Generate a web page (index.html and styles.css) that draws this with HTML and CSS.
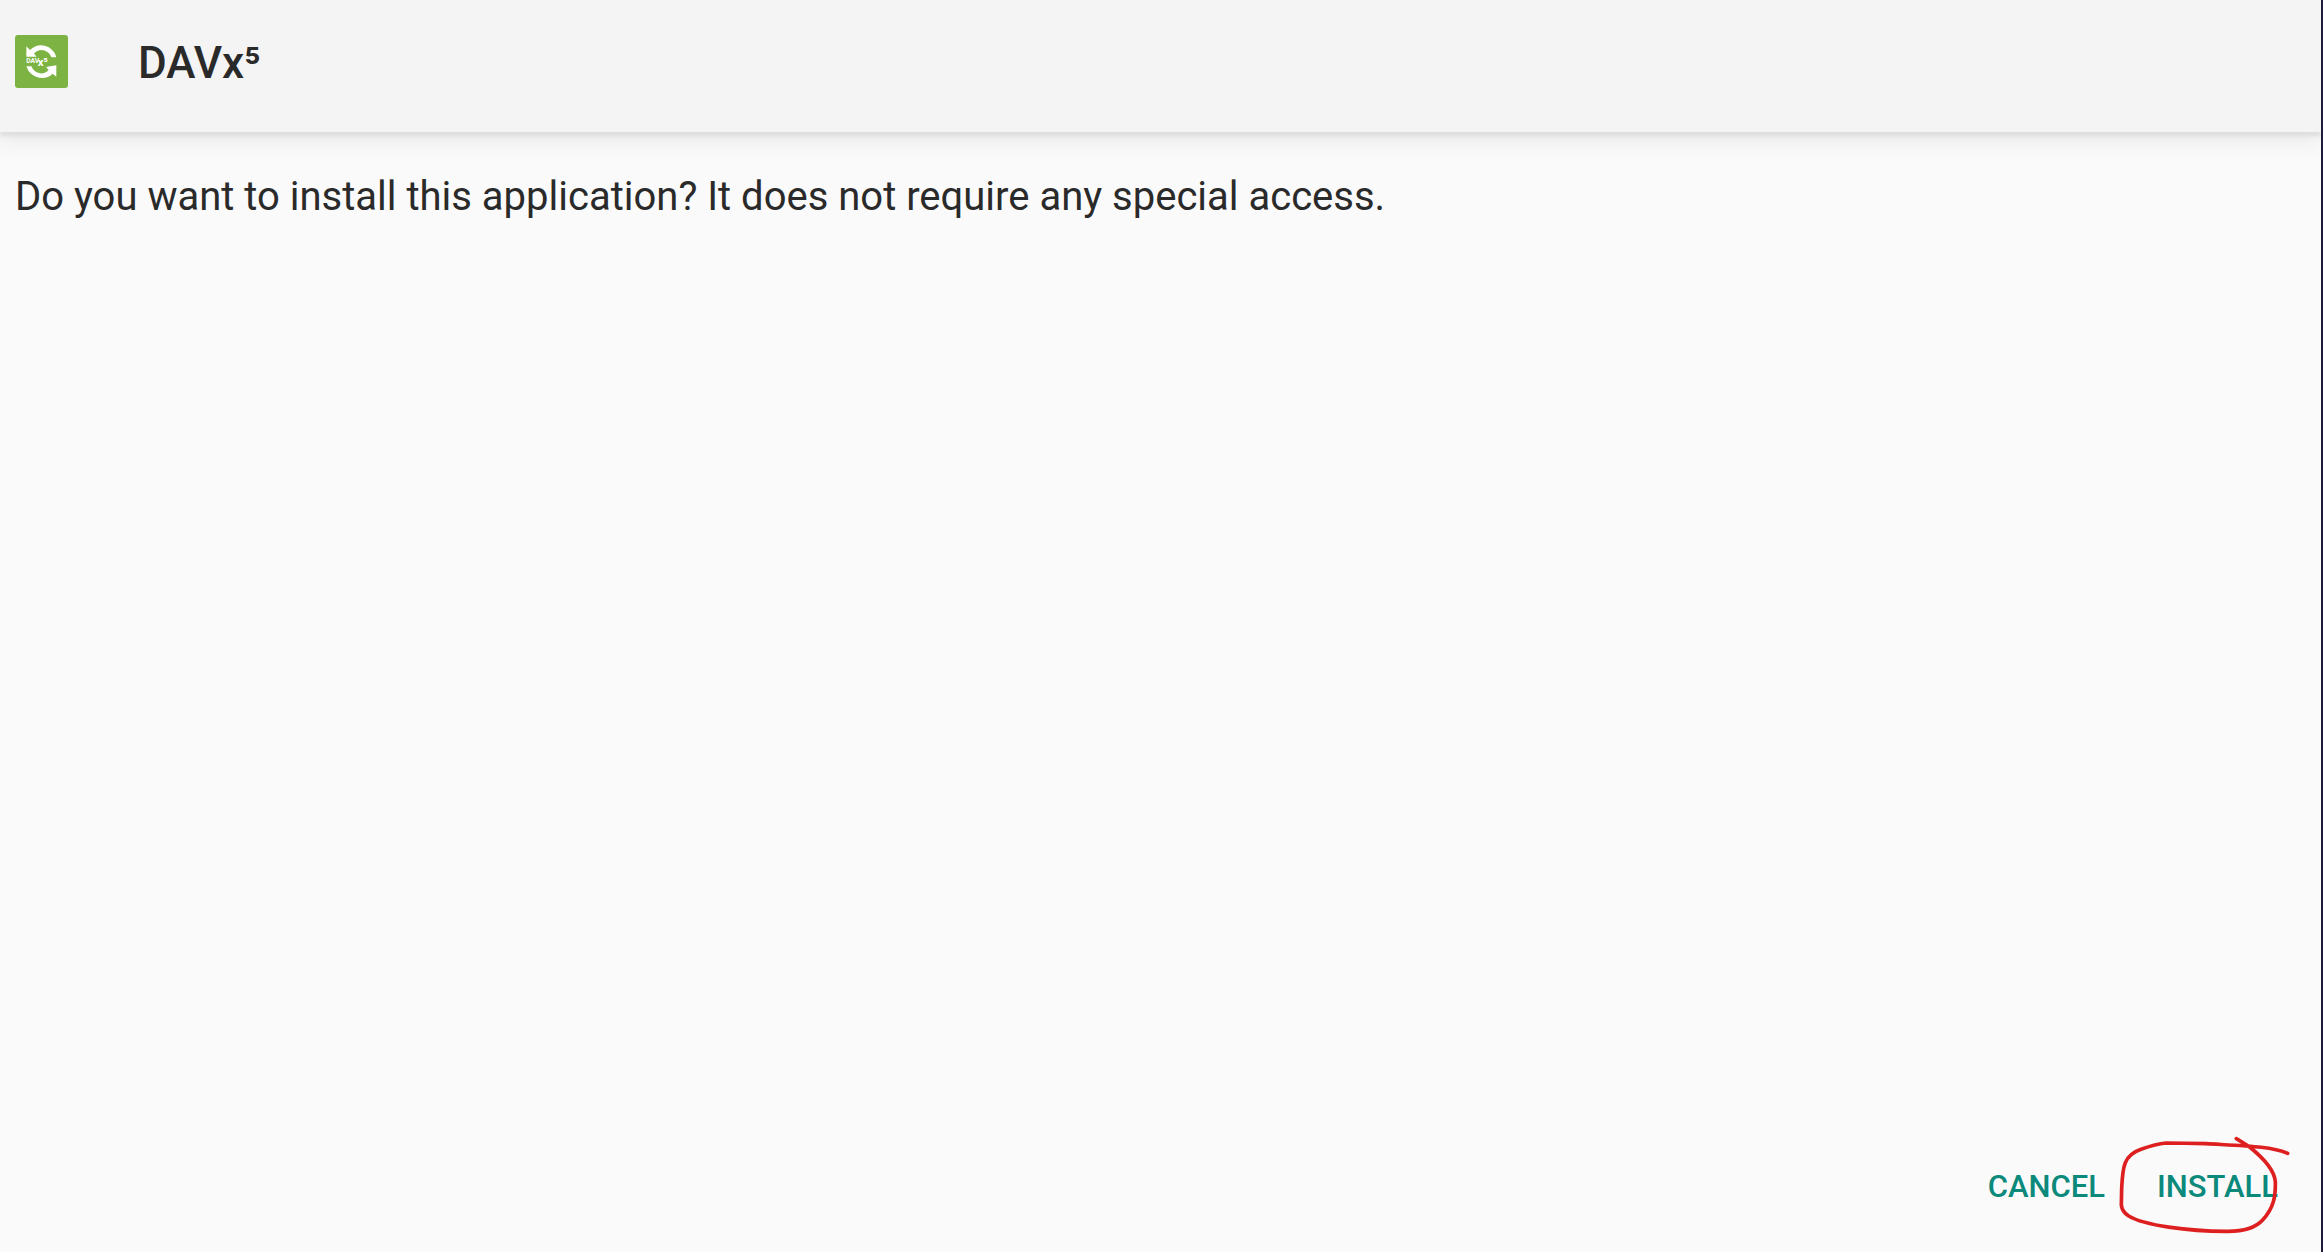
FILE: index.html
```html
<!DOCTYPE html>
<html lang="en">
<head>
    <meta charset="UTF-8">
    <meta name="viewport" content="width=device-width, initial-scale=1.0">
    <title>DAVx⁵</title>
    <link rel="stylesheet" href="styles.css">
</head>
<body>
    <header class="app-header">
        <!-- App icon -->
        <svg class="app-icon" viewBox="0 0 159 159" aria-hidden="true">
            <rect width="159" height="159" rx="9" fill="#7cb342"/>
            <g fill="#fff">
                <path d="M34 34 L45 45 C62 27 90 26 108 42 Q120 51 124 67 H109 C102 45 72 36 57 56 L65 65 H34 Z"/>
                <path d="M124 125 L113 116 C96 134 68 132 50 118 Q38 108 34 94 H49 C58 116 86 123 101 105 L93 96 L124 91 Z"/>
                <text x="34" y="85" class="icon-text">DAV</text>
                <text x="68" y="92" class="icon-x">x⁵</text>
            </g>
        </svg>
        <h1>DAVx⁵</h1>
    </header>

    <main>
        <p>Do you want to install this application? It does not require any special access.</p>
    </main>

    <footer class="actions">
        <button type="button" class="action">CANCEL</button>
        <div class="marked">
            <button type="button" class="action">INSTALL</button>
            <!-- Hand drawn ring -->
            <svg class="ring" viewBox="465 72 540 312" aria-hidden="true">
                <path d="M980 130 C930 109 860 108 735 101 Q670 99 615 99 Q585 101 540 118 C488 136 485 170 482 235 L481 285 Q483 305 503 318 C550 346 680 364 795 364 C850 365 885 352 905 330 C938 295 944 260 943 215 C940 175 900 138 862 108 L826 86"/>
            </svg>
        </div>
    </footer>
</body>
</html>
```
FILE: styles.css
```css
* {
    box-sizing: border-box;
}

body {
    margin: 0;
    min-height: 100vh;
    display: flex;
    flex-direction: column;
    background-color: #fafafa;
    border-right: 2px solid #1c1c3a;
    color: #2a2a2a;
    font-family: Roboto, sans-serif;
}

.app-header {
    display: flex;
    align-items: flex-start;
    gap: 70px;
    padding: 35px 15px 40px;
    background-color: #f4f4f4;
    box-shadow: 0 4px 4px #dedede, 0 8px 20px #e8e8e8;
}

.app-icon {
    width: 53px;
    height: 53px;
}

.icon-text {
    font-size: 20px;
    font-weight: 700;
}

.icon-x {
    font-size: 34px;
    font-weight: 700;
}

h1 {
    margin: 0;
    font-size: 44px;
    font-weight: 500;
    line-height: 57px;
}

main {
    flex: 1;
    padding: 41px 15px;
}

p {
    margin: 0;
    font-size: 40px;
    line-height: 48px;
}

.actions {
    display: flex;
    justify-content: flex-end;
    gap: 52px;
    padding: 0 43px 45px;
}

.action {
    padding: 0;
    border: none;
    background: none;
    color: #0b897b;
    font-family: inherit;
    font-size: 31px;
    font-weight: 500;
    line-height: 40px;
    cursor: pointer;
}

.marked {
    position: relative;
}

.ring {
    position: absolute;
    top: -33px;
    right: -18px;
    width: 180px;
    height: 104px;
    fill: none;
    stroke: #de1f20;
    stroke-width: 11;
    stroke-linecap: round;
    stroke-linejoin: round;
    pointer-events: none;
}
```
